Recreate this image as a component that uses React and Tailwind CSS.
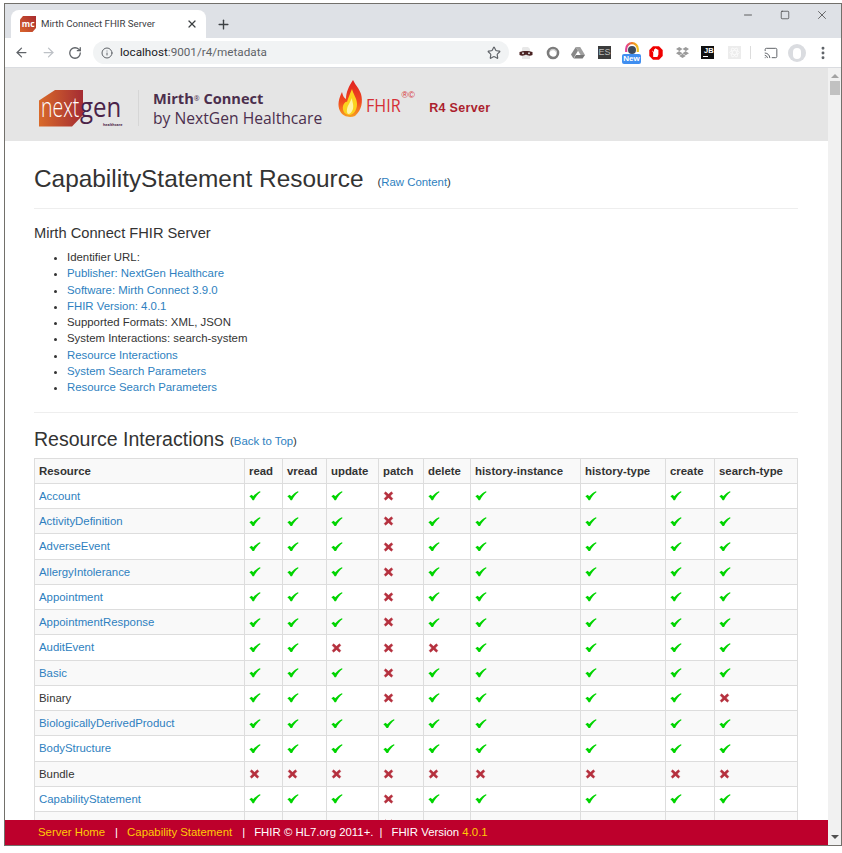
import React from 'react';
import { ArrowLeft, ArrowRight, RotateCw, Info, Star, X, Plus, Minus, Square, MoreVertical, Cast } from 'lucide-react';
import { FaDropbox } from 'react-icons/fa';

const full = [1, 1, 1, 0, 1, 1, 1, 1, 1];

const rows = [
    { name: 'Account', link: true, ops: full },
    { name: 'ActivityDefinition', link: true, ops: full },
    { name: 'AdverseEvent', link: true, ops: full },
    { name: 'AllergyIntolerance', link: true, ops: full },
    { name: 'Appointment', link: true, ops: full },
    { name: 'AppointmentResponse', link: true, ops: full },
    { name: 'AuditEvent', link: true, ops: [1, 1, 0, 0, 0, 1, 1, 1, 1] },
    { name: 'Basic', link: true, ops: full },
    { name: 'Binary', link: false, ops: [1, 1, 1, 0, 1, 1, 1, 1, 0] },
    { name: 'BiologicallyDerivedProduct', link: true, ops: [1, 1, 1, 1, 1, 1, 1, 1, 1] },
    { name: 'BodyStructure', link: true, ops: [1, 1, 1, 1, 1, 1, 1, 1, 1] },
    { name: 'Bundle', link: false, ops: [0, 0, 0, 0, 0, 0, 0, 0, 0] },
    { name: 'CapabilityStatement', link: true, ops: full },
    // cut off by the footer, only the tops of the icons show
    { name: '', link: true, ops: full },
];

const columns = [
    ['read', 38],
    ['vread', 44],
    ['update', 52],
    ['patch', 45],
    ['delete', 47],
    ['history-instance', 110],
    ['history-type', 85],
    ['create', 49],
    ['search-type', 83],
];

const summary = [
    ['Identifier URL:', false],
    ['Publisher: NextGen Healthcare', true],
    ['Software: Mirth Connect 3.9.0', true],
    ['FHIR Version: 4.0.1', true],
    ['Supported Formats: XML, JSON', false],
    ['System Interactions: search-system', false],
    ['Resource Interactions', true],
    ['System Search Parameters', true],
    ['Resource Search Parameters', true],
];

const Check = () => (
    <svg width="12" height="9.5" viewBox="0 0 13 11" preserveAspectRatio="none" className="block">
        <path d="M0.4 6.2L2.9 4.4L4.6 6.2C6.4 3.8 8.8 1.6 11.8 0.2L12.6 1.2C9.8 3.4 7.2 6.8 5.4 10.6L3.9 10.6C3 8.8 1.8 7.4 0.4 6.2Z" fill="#00d400" />
    </svg>
);

const Cross = () => (
    <svg width="11" height="10" viewBox="0 0 12 11" preserveAspectRatio="none" className="block">
        <path d="M1.2 2.6L2.9 0.9L6 3.6L9.1 0.9L10.8 2.6L8 5.5L10.8 8.4L9.1 10.1L6 7.4L2.9 10.1L1.2 8.4L4 5.5Z" fill="#b5303e" stroke="#b5303e" strokeWidth="0.5" strokeLinejoin="round" />
    </svg>
);

const Favicon = () => (
    <svg width="16" height="16" viewBox="0 0 16 16" className="shrink-0">
        <defs>
            <linearGradient id="fav" x1="0" y1="1" x2="1" y2="0">
                <stop offset="0" stopColor="#d9652c" />
                <stop offset="1" stopColor="#a82a2f" />
            </linearGradient>
        </defs>
        <path d="M3 0H16V12L12.5 16H0V3.5Z" fill="url(#fav)" />
        <text x="1.8" y="11" fontSize="8.5" fontWeight="700" fill="#fff" fontFamily="Open Sans, sans-serif">mc</text>
    </svg>
);

const Extensions = () => (
    <div className="flex items-center h-full">
        {/* mask */}
        <svg width="14" height="14" viewBox="0 0 14 14" className="ml-[10px]">
            <path d="M4 1H9L11 3V13H3V2Z" fill="#e8e8e8" />
            <path d="M0.5 6C3 4.5 11 4.5 13.5 6V9C11 10.5 8.5 9.5 7 8.6C5.5 9.5 3 10.5 0.5 9Z" fill="#4a2323" />
            <circle cx="4" cy="7.3" r="1" fill="#ddd" />
            <circle cx="10" cy="7.3" r="1" fill="#ddd" />
        </svg>
        {/* circle */}
        <svg width="14" height="14" viewBox="0 0 14 14" className="ml-[13px]">
            <circle cx="7" cy="7" r="5" fill="none" stroke="#7b7b7b" strokeWidth="2.6" />
            <path d="M4 5C6 2.5 10 3.5 10.5 6" fill="none" stroke="#c9c9c9" strokeWidth="1.4" />
        </svg>
        {/* drive */}
        <svg width="14" height="13" viewBox="0 0 14 13" className="ml-[11px]">
            <path d="M4.8 1H9.2L14 9H9.6Z" fill="#a0a0a0" />
            <path d="M4.8 1L7 4.8L2.4 12.6L0 8.6Z" fill="#888" />
            <path d="M5 9H14L11.6 12.6H2.8Z" fill="#777" />
        </svg>
        {/* ES */}
        <div className="ml-[13px] w-[13px] h-[13px] bg-[#3b3b3b] flex items-center justify-center text-[#bdbdbd] text-[9px] font-['Liberation_Sans',sans-serif]">ES</div>
        {/* rainbow with badge */}
        <div className="relative ml-[11px] w-[18px] h-[20px]">
            <svg width="14" height="12" viewBox="0 0 14 12" className="ml-[3px] mt-[-1px]">
                <path d="M1.2 10V7A5.8 5.8 0 0 1 7 1.2A5.8 5.8 0 0 1 12.8 7V10" fill="none" stroke="url(#rb)" strokeWidth="2.2" />
                <defs>
                    <linearGradient id="rb" x1="0" y1="0" x2="1" y2="0">
                        <stop offset="0" stopColor="#e0409a" />
                        <stop offset="0.5" stopColor="#f07a20" />
                        <stop offset="1" stopColor="#f0c020" />
                    </linearGradient>
                </defs>
                <circle cx="7" cy="8" r="4" fill="#3d4a5c" />
            </svg>
            <div className="absolute left-0 top-[11px] w-[19px] h-[10px] rounded-[2px] bg-[#3f8ef0] text-white text-[8px] leading-[10px] font-bold text-center font-['Liberation_Sans',sans-serif]">New</div>
        </div>
        {/* stop hand */}
        <svg width="14" height="14" viewBox="0 0 14 14" className="ml-[9px]">
            <path d="M4 0.3H10L13.7 4V10L10 13.7H4L0.3 10V4Z" fill="#f00000" />
            <path d="M4.2 11V6.5L3.4 5.4V4.6L5 6V3.2H6V5.6V2.6H7.2V5.6V3H8.3V5.8V3.8H9.4V8.6L8.4 11Z" fill="#fff" />
        </svg>
        {/* dropbox */}
        <FaDropbox className="ml-[13px] text-[#9b9b9b]" size={13} />
        {/* JB */}
        <div className="ml-[12px] w-[13px] h-[13px] bg-[#111] text-white text-[7.5px] leading-[8px] font-bold pl-[3px] pt-[1px] font-['Liberation_Sans',sans-serif] flex flex-col">
            <span>JB</span>
            <span className="mt-[1px] w-[5px] h-[1px] bg-white ml-[-1px]" />
        </div>
        {/* react, greyed out */}
        <div className="ml-[14px] w-[13px] h-[13px] bg-[#ececec] flex items-center justify-center">
            <svg width="11" height="11" viewBox="0 0 11 11" fill="none" stroke="#fafafa" strokeWidth="0.8">
                <ellipse cx="5.5" cy="5.5" rx="5" ry="2" />
                <ellipse cx="5.5" cy="5.5" rx="5" ry="2" transform="rotate(60 5.5 5.5)" />
                <ellipse cx="5.5" cy="5.5" rx="5" ry="2" transform="rotate(120 5.5 5.5)" />
            </svg>
        </div>
        <div className="ml-[9px] w-px h-[13px] bg-[#dcdcdc]" />
        <Cast className="ml-[13px] text-[#5f6368]" size={14} strokeWidth={1.7} />
        {/* avatar */}
        <div className="ml-[10px] w-[18px] h-[18px] rounded-full bg-[#dadce0] flex items-center justify-center">
            <div className="w-[8px] h-[11px] rounded-full bg-white mt-[1px]" />
        </div>
        <MoreVertical className="ml-[9px] text-[#5f6368]" size={16} strokeWidth={2.4} />
    </div>
);

const NextGenLogo = () => (
    <svg width="92" height="40" viewBox="0 0 92 40" className="shrink-0 overflow-visible">
        <defs>
            <linearGradient id="ng" x1="0" y1="0" x2="1" y2="0">
                <stop offset="0" stopColor="#d96a2a" />
                <stop offset="1" stopColor="#a42c33" />
            </linearGradient>
        </defs>
        <path d="M0 10.5L16 0H44V25L33 36.5H0Z" fill="url(#ng)" />
        <text transform="translate(2 27) scale(0.72 1)" fontSize="27" fill="#fff" fontFamily="Open Sans, sans-serif" fontWeight="300">next</text>
        <text transform="translate(41 27) scale(0.89 1)" fontSize="27" fill="#4a2348" fontFamily="Open Sans, sans-serif" fontWeight="400">gen</text>
        <text x="64" y="35.5" fontSize="3.6" fill="#4a2348" fontFamily="Open Sans, sans-serif" fontWeight="700">healthcare</text>
    </svg>
);

const FhirLogo = () => (
    <svg width="78" height="38" viewBox="0 0 78 38" className="shrink-0 overflow-visible">
        <defs>
            <linearGradient id="fl" x1="0" y1="0" x2="0" y2="1">
                <stop offset="0" stopColor="#e02020" />
                <stop offset="0.6" stopColor="#f04a20" />
                <stop offset="1" stopColor="#f8a020" />
            </linearGradient>
        </defs>
        <path d="M15 0C18 6 21 8 23 14C25 21 24 30 17 36C12 38 5 37 2 31C-1 25 1 18 4 12C5 16 6 18 8 19C8 12 11 6 15 0Z" fill="url(#fl)" />
        <path d="M14 9C15 14 19 18 19 24C19 30 16 34 12 35C7 35 4 31 5 26C6 23 8 21 9 22C10 18 12 14 14 9Z" fill="#fbd21e" />
        <path d="M14 18C14 22 16 24 15 29C14 32 12 34 10 34C8 32 9 27 11 24C12 22 13 20 14 18Z" fill="#fff3a8" />
        <text transform="translate(28 32) scale(0.85 1)" fontSize="19" fill="#d62f36" fontFamily="Open Sans, sans-serif" fontWeight="400">FHIR</text>
        <text x="63.5" y="18" fontSize="9" fill="#d62f36" fontFamily="Liberation Sans, sans-serif">®©</text>
    </svg>
);

const Page = () => (
    <div className="font-['Liberation_Sans',Arial,sans-serif] text-[11.4px] leading-[16.3px] text-[#333]">
        {/* Banner */}
        <div className="h-[73px] bg-[#e5e5e5] flex items-start">
            <div className="ml-[34px] mt-[22px]"><NextGenLogo /></div>
            <div className="ml-[7px] mt-[22px] w-px h-[36px] bg-[#d6d6d6]" />
            <div className="ml-[14px] mt-[21px] font-['Open_Sans',sans-serif] text-[#4b2f4d] whitespace-nowrap">
                <div className="text-[14.6px] leading-[18px] font-bold">Mirth<sup className="text-[7px] font-normal">®</sup> Connect</div>
                <div className="mt-[2px] text-[15.66px] leading-[19px]">by NextGen Healthcare</div>
            </div>
            <div className="ml-[16px] mt-[12px]"><FhirLogo /></div>
            <div className="ml-[13px] mt-[32px] text-[12.5px] font-bold text-[#ac1f2e] tracking-[0.3px] whitespace-nowrap">R4 Server</div>
        </div>

        <div className="pl-[29px] pr-[30px]">
            {/* Title */}
            <div className="h-[68px] border-b border-[#eee] flex items-start pt-[24px]">
                <h1 className="text-[24.4px] leading-[28px]">CapabilityStatement Resource</h1>
                <span className="ml-[14px] mt-[9px] whitespace-nowrap">(<a className="text-[#2e7fc0]">Raw Content</a>)</span>
            </div>

            <h4 className="mt-[15px] text-[14.66px] leading-[18px]">Mirth Connect FHIR Server</h4>
            <ul className="mt-[7px] pl-[33px] list-disc">
                {summary.map(([text, link]) => (
                    <li key={text} className={link ? 'text-[#2e7fc0] marker:text-[#333]' : ''}>{text}</li>
                ))}
            </ul>

            <div className="mt-[16px] border-t border-[#eee]" />

            <div className="mt-[15px] flex items-end h-[22px]">
                <h2 className="text-[19.55px] leading-[22px]">Resource Interactions</h2>
                <span className="ml-[6px] whitespace-nowrap">(<a className="text-[#2e7fc0]">Back to Top</a>)</span>
            </div>

            {/* Interactions */}
            <table className="mt-[8px] w-[763px] table-fixed border-collapse border border-[#ddd]">
                <colgroup>
                    <col className="w-[210px]" />
                    {columns.map(([name, width]) => (
                        <col key={name} style={{ width }} />
                    ))}
                </colgroup>
                <thead>
                    <tr className="h-[25.25px] bg-[#f9f9f9]">
                        <th className="border border-[#ddd] px-[4px] text-left font-bold">Resource</th>
                        {columns.map(([name]) => (
                            <th key={name} className="border border-[#ddd] px-[4px] text-left font-bold whitespace-nowrap">{name}</th>
                        ))}
                    </tr>
                </thead>
                <tbody>
                    {rows.map((row, i) => (
                        <tr key={i} className={`h-[25.25px] ${i % 2 ? 'bg-[#f9f9f9]' : 'bg-white'}`}>
                            <td className={`border border-[#ddd] px-[4px] ${row.link ? 'text-[#2e7fc0]' : ''}`}>{row.name}</td>
                            {row.ops.map((on, j) => (
                                <td key={j} className="border border-[#ddd] px-[4px]">
                                    {on ? <Check /> : <Cross />}
                                </td>
                            ))}
                        </tr>
                    ))}
                </tbody>
            </table>
        </div>
    </div>
);

export default function App() {
    return (
        <div className="w-[842px] h-[853px] bg-white pt-[3px] pl-[4px] overflow-hidden">
            <div className="w-[838px] h-[843px] border border-[#72706b] flex flex-col overflow-hidden">
                {/* Tab strip */}
                <div className="h-[34px] shrink-0 bg-[#dee1e6] flex items-end pl-[6px]">
                    <div className="w-[195px] h-[28px] bg-white rounded-t-[8px] flex items-center pl-[9px] pr-[8px] font-['Roboto',sans-serif] text-[9.7px] text-[#3c4043]">
                        <Favicon />
                        <span className="ml-[5px] flex-1 whitespace-nowrap">Mirth Connect FHIR Server</span>
                        <X size={12} strokeWidth={2.4} className="text-[#3c4043]" />
                    </div>
                    <Plus size={15} strokeWidth={2.2} className="ml-[10px] mb-[6px] text-[#3c4043]" />
                    <div className="flex-1" />
                    <div className="self-start flex items-center h-[22px] text-[#333]">
                        <Minus size={12} strokeWidth={1.5} />
                        <Square size={10} strokeWidth={1.6} className="ml-[26px]" />
                        <X size={14} strokeWidth={1.2} className="ml-[25px] mr-[12px]" />
                    </div>
                </div>

                {/* Toolbar */}
                <div className="h-[30px] shrink-0 bg-white border-b border-[#dadce0] flex items-center pl-[9px]">
                    <ArrowLeft size={15} strokeWidth={2} className="text-[#5f6368]" />
                    <ArrowRight size={15} strokeWidth={2} className="ml-[12px] text-[#bdc1c6]" />
                    <RotateCw size={14} strokeWidth={2.2} className="ml-[12px] text-[#5f6368]" />
                    <div className="ml-[11px] w-[416px] h-[23px] rounded-full bg-[#f1f3f4] flex items-center pl-[8px] pr-[8px] font-['Roboto',sans-serif] text-[11.7px]">
                        <Info size={12} strokeWidth={2} className="text-[#5f6368]" />
                        <span className="ml-[7px] flex-1 text-[#5f6368]"><span className="text-[#202124]">localhost</span>:9001/r4/metadata</span>
                        <Star size={14} strokeWidth={2} className="text-[#5f6368]" />
                    </div>
                    <Extensions />
                </div>

                {/* Page and scrollbar */}
                <div className="flex-1 min-h-0 flex">
                    <div className="relative flex-1 min-w-0 overflow-hidden">
                        <Page />
                        <div className="absolute left-0 right-0 bottom-0 h-[25px] bg-[#bd002c] flex items-center pl-[33px] pt-[1px] font-['Liberation_Sans',sans-serif] text-[11.4px] text-white whitespace-nowrap">
                            <a className="text-[#ffcb05]">Server Home</a>
                            <span className="ml-[10px]">|</span>
                            <a className="ml-[9px] text-[#ffcb05]">Capability Statement</a>
                            <span className="ml-[10px]">|</span>
                            <span className="ml-[9px]">FHIR © HL7.org 2011+.</span>
                            <span className="ml-[6px]">|</span>
                            <span className="ml-[9px]">FHIR Version <span className="text-[#ffcb05]">4.0.1</span></span>
                        </div>
                    </div>
                    <div className="w-[13px] shrink-0 bg-[#f1f1f1] flex flex-col items-center">
                        <div className="mt-[6px] w-0 h-0 border-x-[4px] border-x-transparent border-b-[4px] border-b-[#a3a3a3]" />
                        <div className="mt-[3px] w-[10px] h-[14px] bg-[#c1c1c1]" />
                        <div className="flex-1" />
                        <div className="mb-[6px] w-0 h-0 border-x-[4px] border-x-transparent border-t-[4px] border-t-[#505050]" />
                    </div>
                </div>
            </div>
        </div>
    );
}
